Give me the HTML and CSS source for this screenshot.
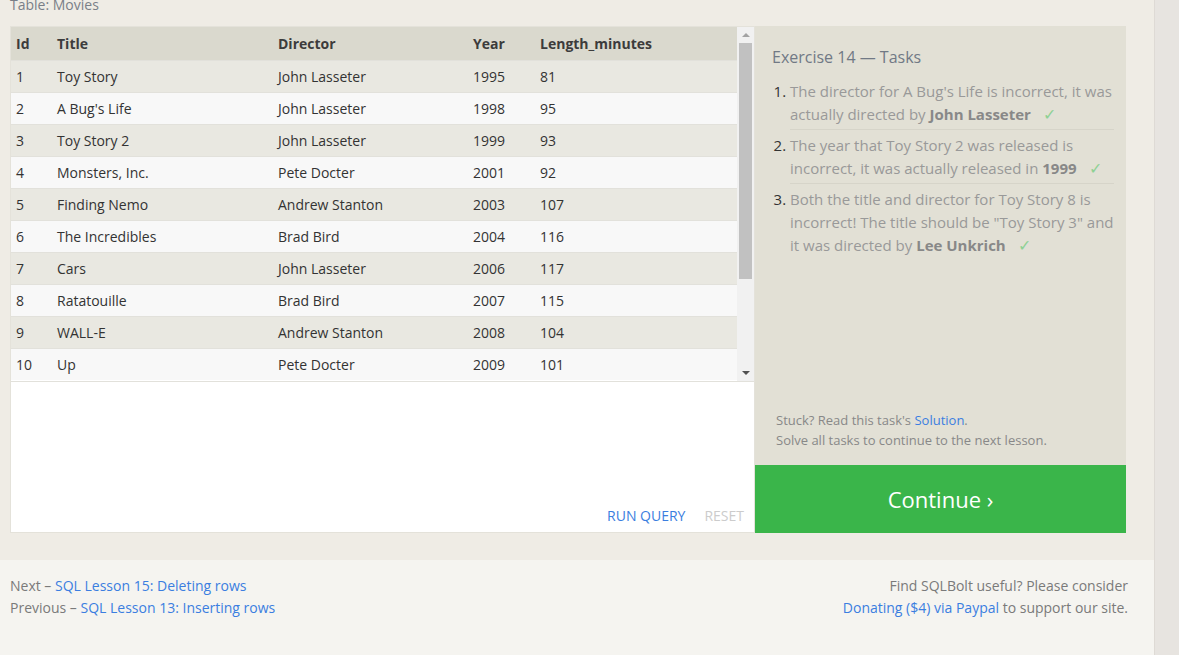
FILE: index.html
```html
<!DOCTYPE html>
<html>
<head>
<meta charset="utf-8">
<link rel="stylesheet" href="styles.css">
</head>
<body>
<div class="page">
  <div class="lesson">
    <div class="table-label">Table: Movies</div>
    <div class="exercise">
      <div class="left">
        <div class="results">
          <div class="results-scroll">
            <table class="movies">
              <thead>
                <tr><th class="c-id">Id</th><th class="c-title">Title</th><th class="c-dir">Director</th><th class="c-year">Year</th><th>Length_minutes</th></tr>
              </thead>
              <tbody>
                <tr><td>1</td><td>Toy Story</td><td>John Lasseter</td><td>1995</td><td>81</td></tr>
                <tr><td>2</td><td>A Bug's Life</td><td>John Lasseter</td><td>1998</td><td>95</td></tr>
                <tr><td>3</td><td>Toy Story 2</td><td>John Lasseter</td><td>1999</td><td>93</td></tr>
                <tr><td>4</td><td>Monsters, Inc.</td><td>Pete Docter</td><td>2001</td><td>92</td></tr>
                <tr><td>5</td><td>Finding Nemo</td><td>Andrew Stanton</td><td>2003</td><td>107</td></tr>
                <tr><td>6</td><td>The Incredibles</td><td>Brad Bird</td><td>2004</td><td>116</td></tr>
                <tr><td>7</td><td>Cars</td><td>John Lasseter</td><td>2006</td><td>117</td></tr>
                <tr><td>8</td><td>Ratatouille</td><td>Brad Bird</td><td>2007</td><td>115</td></tr>
                <tr><td>9</td><td>WALL-E</td><td>Andrew Stanton</td><td>2008</td><td>104</td></tr>
                <tr><td>10</td><td>Up</td><td>Pete Docter</td><td>2009</td><td>101</td></tr>
              </tbody>
            </table>
          </div>
          <div class="scrollbar">
            <div class="arrow up"></div>
            <div class="track"><div class="thumb"></div></div>
            <div class="arrow down"></div>
          </div>
        </div>
        <div class="editor">
          <div class="actions">
            <span class="run">RUN QUERY</span>
            <span class="reset">RESET</span>
          </div>
        </div>
      </div>
      <div class="right">
        <div class="tasks">
          <h3 class="tasks-title">Exercise 14 — Tasks</h3>
          <ol class="task-list">
            <li>The director for A Bug's Life is incorrect, it was actually directed by <b>John Lasseter</b><span class="check">✓</span></li>
            <li>The year that Toy Story 2 was released is incorrect, it was actually released in <b>1999</b><span class="check">✓</span></li>
            <li>Both the title and director for Toy Story 8 is incorrect! The title should be "Toy Story 3" and it was directed by <b>Lee Unkrich</b><span class="check">✓</span></li>
          </ol>
        </div>
        <div class="help">
          <div>Stuck? Read this task's <a class="link">Solution</a>.</div>
          <div>Solve all tasks to continue to the next lesson.</div>
        </div>
        <div class="continue">Continue ›</div>
      </div>
    </div>
  </div>
  <div class="footer">
    <div class="nav">
      <div>Next – <a class="link">SQL Lesson 15: Deleting rows</a></div>
      <div>Previous – <a class="link">SQL Lesson 13: Inserting rows</a></div>
    </div>
    <div class="donate">
      <div>Find SQLBolt useful? Please consider</div>
      <div><a class="link">Donating ($4) via Paypal</a> to support our site.</div>
    </div>
  </div>
</div>
</body>
</html>
```

FILE: styles.css
```css
html, body {
  margin: 0;
  padding: 0;
}
body {
  background: #e7e4e0;
  font-family: "Open Sans", "Noto Sans", sans-serif;
  color: #333;
  height: 655px;
  overflow: hidden;
}
.page {
  width: 1154px;
  background: #f5f4f0;
  border-right: 1px solid #dedad5;
  min-height: 700px;
}
.lesson {
  background: #efece5;
  padding: 0 0 27px 10px;
  margin-top: -5px;
}
.table-label {
  font-size: 14px;
  line-height: 19px;
  color: #7a7f88;
  padding-bottom: 12px;
}
.exercise {
  display: flex;
  width: 1116px;
  height: 507px;
}
.left {
  width: 743px;
  display: flex;
  flex-direction: column;
  background: #fff;
  border: 1px solid #e4e2da;
}
.results {
  display: flex;
  height: 354px;
  border-bottom: 1px solid #e2e1db;
}
.results-scroll {
  flex: 1;
  overflow: hidden;
}
.movies {
  width: 100%;
  border-collapse: collapse;
  font-size: 14px;
}
.movies th {
  background: #dad9ce;
  text-align: left;
  font-weight: 700;
  color: #3c3c3c;
  height: 33px;
  padding: 0 0 0 5px;
}
.movies td {
  height: 30px;
  padding: 0 0 1px 5px;
  color: #333;
  border-top: 1px solid #e2e1db;
}
.movies tbody tr:nth-child(odd) td {
  background: #e9e8e1;
}
.movies tbody tr:nth-child(even) td {
  background: #f8f8f8;
}
.c-id { width: 36px; }
.c-title { width: 216px; }
.c-dir { width: 190px; }
.c-year { width: 62px; }
.scrollbar {
  width: 17px;
  background: #f1f1f1;
  display: flex;
  flex-direction: column;
}
.arrow {
  height: 16px;
  display: flex;
  align-items: center;
  justify-content: center;
}
.arrow::before {
  content: "";
  border-left: 4px solid transparent;
  border-right: 4px solid transparent;
}
.arrow.up::before {
  border-bottom: 4px solid #a3a3a3;
}
.arrow.down::before {
  border-top: 4px solid #505050;
}
.track {
  flex: 1;
  padding: 0 2px;
}
.thumb {
  height: 236px;
  background: #c1c1c1;
}
.editor {
  flex: 1;
  display: flex;
  align-items: flex-end;
  justify-content: flex-end;
}
.actions {
  display: flex;
  gap: 19px;
  font-size: 14px;
  padding: 0 10px 7px 0;
}
.run { color: #3b7ee0; }
.reset { color: #cccccc; }
.right {
  width: 371px;
  display: flex;
  flex-direction: column;
  background: #e2e0d5;
}
.tasks {
  flex: 1;
  padding: 20px 12px 0 17px;
}
.tasks-title {
  margin: 0 0 12px;
  font-weight: 400;
  font-size: 16px;
  color: #717985;
}
.task-list {
  margin: 0;
  padding: 0 0 0 18px;
  font-size: 15px;
  line-height: 23px;
  color: #999;
}
.task-list li {
  padding: 0 0 3px 0;
  margin-bottom: 4px;
  border-bottom: 1px solid #d6d4c9;
}
.task-list li:last-child {
  border-bottom: none;
}
.task-list li::marker {
  color: #333;
}
.task-list b {
  color: #888;
}
.check {
  color: #8fd194;
  margin-left: 12px;
  font-size: 16px;
}
.help {
  padding: 0 10px 15px 21px;
  font-size: 13px;
  line-height: 20px;
  color: #888;
}
.link {
  color: #3b7ee0;
  text-decoration: none;
}
.continue {
  height: 68px;
  background: #3ab54a;
  color: #fff;
  font-size: 22px;
  display: flex;
  align-items: center;
  justify-content: center;
}
.footer {
  display: flex;
  justify-content: space-between;
  padding: 15px 26px 0 10px;
  font-size: 14px;
  line-height: 22px;
  color: #7a7a7a;
}
.donate {
  text-align: right;
}
```
